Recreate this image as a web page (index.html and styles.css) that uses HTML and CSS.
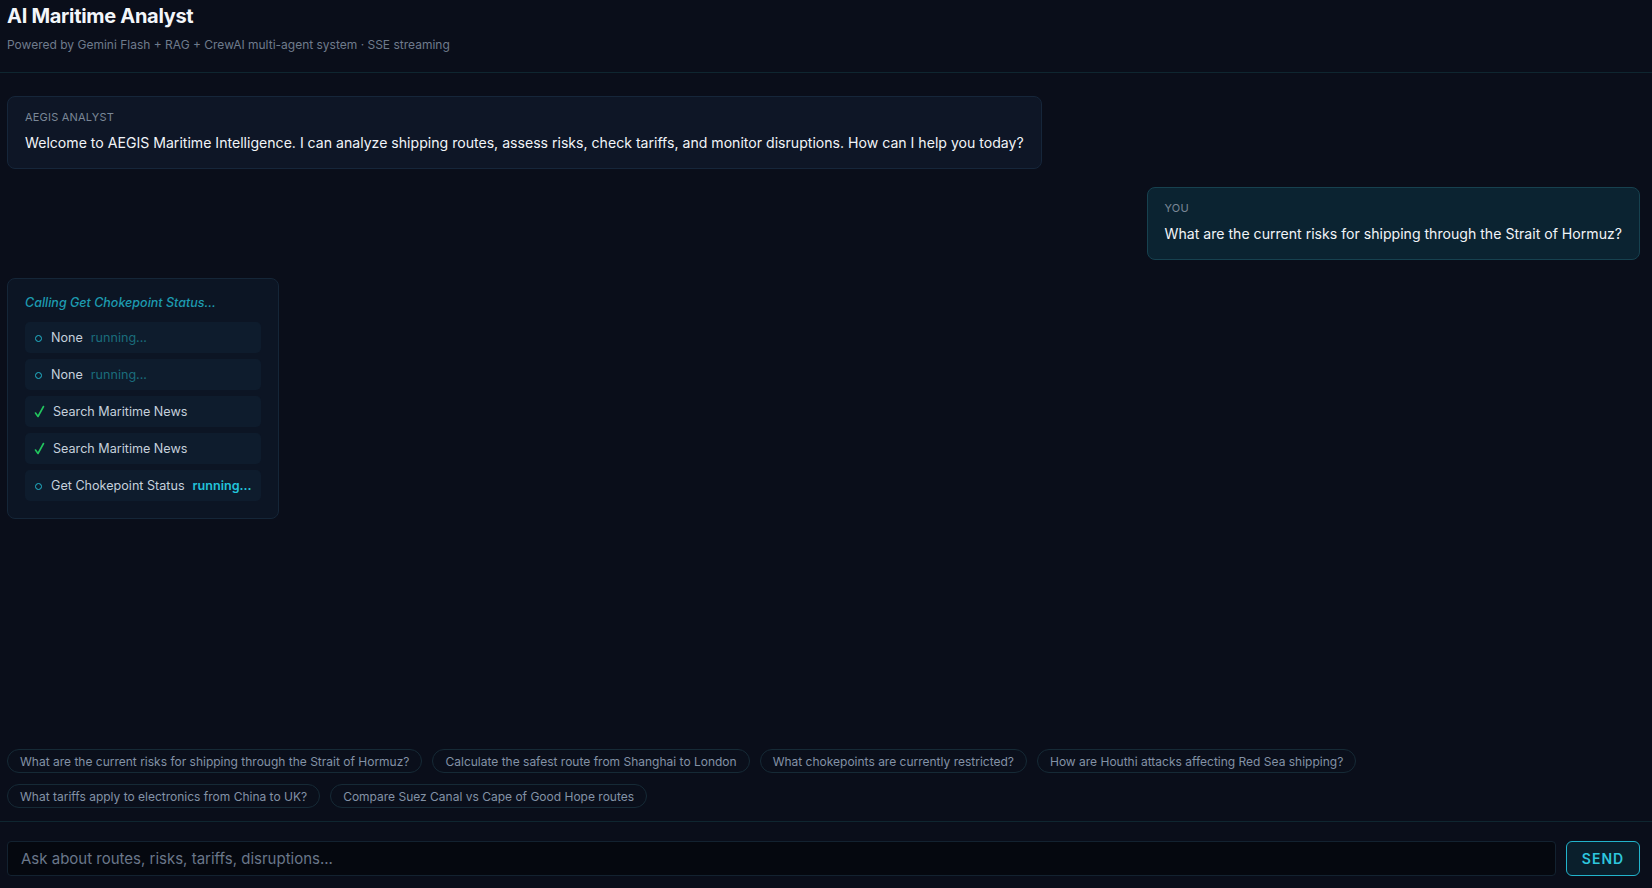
FILE: index.html
```html
<!DOCTYPE html>
<html lang="en">
<head>
  <meta charset="UTF-8">
  <meta name="viewport" content="width=device-width, initial-scale=1.0">
  <title>AI Maritime Analyst</title>
  <link rel="stylesheet" href="styles.css">
</head>
<body>
  <div class="app">
    <!-- Header -->
    <header class="header">
      <h1>AI Maritime Analyst</h1>
      <p class="subtitle">Powered by Gemini Flash + RAG + CrewAI multi-agent system · SSE streaming</p>
    </header>

    <!-- Chat -->
    <div class="messages">
      <div class="bubble bubble-ai">
        <div class="bubble-label">AEGIS ANALYST</div>
        <div class="bubble-text">Welcome to AEGIS Maritime Intelligence. I can analyze shipping routes, assess risks, check tariffs, and monitor disruptions. How can I help you today?</div>
      </div>

      <div class="bubble bubble-user">
        <div class="bubble-label">YOU</div>
        <div class="bubble-text">What are the current risks for shipping through the Strait of Hormuz?</div>
      </div>

      <div class="tool-card">
        <div class="tool-title">Calling Get Chokepoint Status...</div>
        <div class="tool-row">
          <span class="dot"></span>
          <span class="tool-name">None</span>
          <span class="tool-status dim">running...</span>
        </div>
        <div class="tool-row">
          <span class="dot"></span>
          <span class="tool-name">None</span>
          <span class="tool-status dim">running...</span>
        </div>
        <div class="tool-row">
          <svg class="check" width="11" height="13" viewBox="0 0 11 13"><path d="M1.5 8 L4 11.5 L9.5 1.5" fill="none" stroke="#22c55e" stroke-width="1.6" stroke-linecap="round" stroke-linejoin="round"/></svg>
          <span class="tool-name">Search Maritime News</span>
        </div>
        <div class="tool-row">
          <svg class="check" width="11" height="13" viewBox="0 0 11 13"><path d="M1.5 8 L4 11.5 L9.5 1.5" fill="none" stroke="#22c55e" stroke-width="1.6" stroke-linecap="round" stroke-linejoin="round"/></svg>
          <span class="tool-name">Search Maritime News</span>
        </div>
        <div class="tool-row">
          <span class="dot"></span>
          <span class="tool-name">Get Chokepoint Status</span>
          <span class="tool-status active">running...</span>
        </div>
      </div>
    </div>

    <!-- Suggestions -->
    <div class="suggestions">
      <button class="chip">What are the current risks for shipping through the Strait of Hormuz?</button>
      <button class="chip">Calculate the safest route from Shanghai to London</button>
      <button class="chip">What chokepoints are currently restricted?</button>
      <button class="chip">How are Houthi attacks affecting Red Sea shipping?</button>
      <button class="chip">What tariffs apply to electronics from China to UK?</button>
      <button class="chip">Compare Suez Canal vs Cape of Good Hope routes</button>
    </div>

    <!-- Input -->
    <div class="composer">
      <input class="composer-input" type="text" placeholder="Ask about routes, risks, tariffs, disruptions...">
      <button class="send">SEND</button>
    </div>
  </div>
</body>
</html>
```

FILE: styles.css
```css
body {
  margin: 0;
  padding: 0;
  background: #0a0e1a;
  color: #e6edf5;
  font-family: 'Inter', 'Liberation Sans', sans-serif;
  height: 100vh;
  overflow: hidden;
}
.app {
  display: flex;
  flex-direction: column;
  height: 100vh;
  padding: 0 12px 0 7px;
  box-sizing: border-box;
}

/* Header */
.header {
  padding: 4px 0 19px;
  border-bottom: 1px solid #0f2630;
  margin: 0 -12px 0 -7px;
  padding-left: 7px;
}
.header h1 {
  margin: 0;
  font-size: 20px;
  line-height: 24px;
  font-weight: 700;
  color: #f3f6fa;
  letter-spacing: -0.3px;
}
.subtitle {
  margin: 9px 0 0;
  font-size: 12px;
  line-height: 16px;
  color: #6f7b8c;
}

/* Messages */
.messages {
  flex: 1;
  display: flex;
  flex-direction: column;
  align-items: flex-start;
  gap: 18px;
  padding-top: 23px;
}
.bubble {
  max-width: 75%;
  padding: 13px 17px 14px;
  border-radius: 8px;
  border: 1px solid #16263a;
  background: #0e1626;
}
.bubble-user {
  align-self: flex-end;
  background: #0b2331;
  border-color: #17414f;
}
.bubble-label {
  font-size: 11px;
  line-height: 14px;
  color: #7a8797;
  letter-spacing: 0.2px;
}
.bubble-text {
  margin-top: 8px;
  font-size: 14.1px;
  line-height: 22px;
  color: #f1f4f8;
}

/* Tool calls */
.tool-card {
  padding: 16px 17px 17px;
  border: 1px solid #152638;
  border-radius: 8px;
  background: #0c1524;
  display: flex;
  flex-direction: column;
  gap: 6px;
}
.tool-title {
  font-size: 12.5px;
  line-height: 16px;
  font-style: italic;
  font-weight: 500;
  color: #1d9bb0;
  margin-bottom: 5px;
}
.tool-row {
  display: flex;
  align-items: center;
  height: 31px;
  padding: 0 9px;
  border-radius: 5px;
  background: #0e1c2d;
  font-size: 12.6px;
  color: #c5d0dc;
}
.dot {
  width: 5px;
  height: 5px;
  border: 1.5px solid #22b6cc;
  border-radius: 50%;
  margin: 1px 9px 0 1px;
}
.check {
  flex: none;
  margin: 0 8px 0 0;
}
.tool-status {
  margin-left: 8px;
}
.tool-status.dim {
  color: #1a6c7c;
}
.tool-status.active {
  color: #22c3da;
  font-weight: 600;
}

/* Suggestions */
.suggestions {
  display: flex;
  flex-wrap: wrap;
  gap: 11px 10px;
  padding-bottom: 13px;
}
.chip {
  height: 24px;
  padding: 0 12px;
  border: 1px solid #162a36;
  border-radius: 999px;
  background: #0a0f1b;
  color: #8392a6;
  font-family: 'Inter', 'Liberation Sans', sans-serif;
  font-size: 12px;
  cursor: pointer;
}

/* Input */
.composer {
  display: flex;
  gap: 10px;
  padding: 19px 0 12px;
  border-top: 1px solid #0f2630;
  margin: 0 -12px 0 -7px;
  padding-left: 7px;
  padding-right: 12px;
}
.composer-input {
  flex: 1;
  height: 35px;
  box-sizing: border-box;
  padding: 0 13px;
  border: 1px solid #132230;
  border-radius: 4px;
  background: #05080f;
  color: #e6edf5;
  font-family: 'Inter', 'Liberation Sans', sans-serif;
  font-size: 15px;
  outline: none;
}
.composer-input::placeholder {
  color: #6a778a;
}
.send {
  width: 74px;
  height: 35px;
  border: 1px solid #22b4cc;
  border-radius: 6px;
  background: #0a1f2c;
  color: #2ec6de;
  font-family: 'Inter', 'Liberation Sans', sans-serif;
  font-size: 14px;
  font-weight: 600;
  letter-spacing: 1px;
  cursor: pointer;
}
```
